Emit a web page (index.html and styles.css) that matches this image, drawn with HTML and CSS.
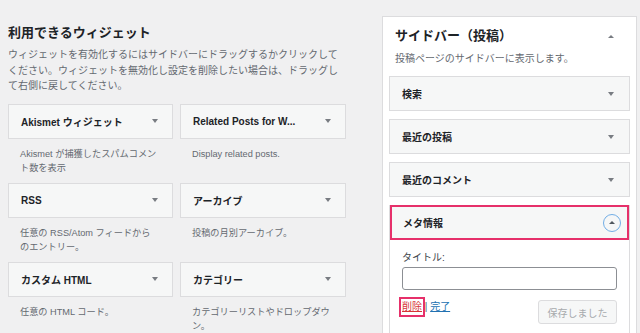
FILE: index.html
```html
<!DOCTYPE html>
<html lang="ja">
<head>
  <meta charset="utf-8">
  <title>ウィジェット</title>
  <link rel="stylesheet" href="styles.css">
</head>
<body>
  <div class="widgets-page">
    <div class="available">
      <h2>利用できるウィジェット</h2>
      <p class="intro">ウィジェットを有効化するにはサイドバーにドラッグするかクリックしてください。ウィジェットを無効化し設定を削除したい場合は、ドラッグして右側に戻してください。</p>
      <div class="widget-list">
        <div class="widget">
          <div class="widget-top"><span>Akismet ウィジェット</span><i class="arrow-down"></i></div>
          <p class="widget-desc">Akismet が捕獲したスパムコメント数を表示</p>
        </div>
        <div class="widget">
          <div class="widget-top"><span>Related Posts for W...</span><i class="arrow-down"></i></div>
          <p class="widget-desc">Display related posts.</p>
        </div>
        <div class="widget">
          <div class="widget-top"><span>RSS</span><i class="arrow-down"></i></div>
          <p class="widget-desc">任意の RSS/Atom フィードからのエントリー。</p>
        </div>
        <div class="widget">
          <div class="widget-top"><span>アーカイブ</span><i class="arrow-down"></i></div>
          <p class="widget-desc">投稿の月別アーカイブ。</p>
        </div>
        <div class="widget">
          <div class="widget-top"><span>カスタム HTML</span><i class="arrow-down"></i></div>
          <p class="widget-desc">任意の HTML コード。</p>
        </div>
        <div class="widget">
          <div class="widget-top"><span>カテゴリー</span><i class="arrow-down"></i></div>
          <p class="widget-desc">カテゴリーリストやドロップダウン。</p>
        </div>
      </div>
    </div>

    <div class="sidebar">
      <div class="sidebar-head">
        <h3>サイドバー（投稿）</h3>
        <i class="arrow-up"></i>
      </div>
      <p class="sidebar-desc">投稿ページのサイドバーに表示します。</p>

      <div class="widget-top in-sidebar"><span>検索</span><i class="arrow-down"></i></div>
      <div class="widget-top in-sidebar"><span>最近の投稿</span><i class="arrow-down"></i></div>
      <div class="widget-top in-sidebar"><span>最近のコメント</span><i class="arrow-down"></i></div>

      <div class="widget-open">
        <div class="widget-top in-sidebar highlight">
          <span>メタ情報</span>
          <span class="toggle"><i class="arrow-up"></i></span>
        </div>
        <div class="widget-inside">
          <label for="meta-title">タイトル:</label>
          <input type="text" id="meta-title">
          <div class="widget-actions">
            <div class="links"><a href="#" class="delete">削除</a> | <a href="#" class="done">完了</a></div>
            <button class="btn-save" disabled>保存しました</button>
          </div>
        </div>
      </div>
    </div>
  </div>
</body>
</html>
```

FILE: styles.css
```css
body {
  margin: 0;
  background: #f0f0f1;
  font-family: 'Liberation Sans', 'Noto Sans CJK JP', sans-serif;
  color: #1d2327;
  overflow: hidden;
  height: 333px;
}

.widgets-page {
  display: flex;
  padding-left: 8px;
}

.available {
  width: 338px;
}

.available h2 {
  margin: 0;
  padding-top: 23px;
  font-size: 13px;
  line-height: 20px;
  font-weight: bold;
}

.intro {
  margin: 4px 0 0;
  font-size: 10px;
  line-height: 15.5px;
  color: #646970;
}

.widget-list {
  display: grid;
  grid-template-columns: 165px 166px;
  column-gap: 7px;
  margin-top: 10px;
}

.widget-top {
  display: flex;
  justify-content: space-between;
  align-items: center;
  height: 33px;
  padding: 0 14px 0 12px;
  background: #f6f7f7;
  border: 1px solid #dcdcde;
  font-size: 10px;
  font-weight: bold;
}

.widget-desc {
  margin: 8px 0 8px;
  padding: 0 14px 0 12px;
  min-height: 28px;
  font-size: 9.2px;
  line-height: 14px;
  color: #646970;
}

.arrow-down {
  width: 0;
  height: 0;
  border-left: 3px solid transparent;
  border-right: 3px solid transparent;
  border-top: 4px solid #787c82;
}

.arrow-up {
  width: 0;
  height: 0;
  border-left: 3px solid transparent;
  border-right: 3px solid transparent;
  border-bottom: 3px solid #787c82;
}

/* panel on the right */
.sidebar {
  margin-left: 36px;
  margin-top: 16px;
  width: 241px;
  height: 330px;
  padding: 0 6px;
  background: #fff;
  border: 1px solid #dcdcde;
}

.sidebar-head {
  display: flex;
  justify-content: space-between;
  align-items: center;
  padding: 10px 16px 0 6px;
}

.sidebar-head h3 {
  margin: 0;
  font-size: 13px;
  line-height: 18px;
  font-weight: bold;
}

.sidebar-desc {
  margin: 6px 0 9px 6px;
  font-size: 10px;
  line-height: 16px;
  color: #646970;
}

.widget-top.in-sidebar {
  margin-bottom: 8px;
  padding-right: 15px;
}

.widget-open {
  background: #fff;
  border-left: 1px solid #dcdcde;
  border-right: 1px solid #dcdcde;
}

.widget-top.highlight {
  margin: 0;
  height: 31px;
  padding: 0 6px 0 11px;
  border: 2px solid #e6306a;
}

.toggle {
  display: flex;
  justify-content: center;
  align-items: center;
  width: 16px;
  height: 16px;
  border: 1.5px solid #72aee6;
  border-radius: 50%;
}

.toggle .arrow-up {
  border-bottom-color: #50575e;
}

.widget-inside {
  padding: 11px 12px 10px;
}

.widget-inside label {
  display: block;
  font-size: 10px;
  line-height: 14px;
  color: #3c434a;
}

.widget-inside input {
  display: block;
  box-sizing: border-box;
  width: 100%;
  height: 23px;
  margin-top: 2px;
  border: 1px solid #8c8f94;
  border-radius: 3px;
}

.widget-actions {
  display: flex;
  justify-content: space-between;
  align-items: flex-start;
  margin-top: 10px;
}

.links {
  font-size: 10px;
  line-height: 14px;
  color: #50575e;
}

.links .delete {
  display: inline-block;
  color: #d63638;
  outline: 2px solid #e6306a;
  outline-offset: 1px;
}

.links .done {
  color: #2271b1;
}

.btn-save {
  width: 79px;
  height: 24px;
  padding: 0;
  background: #f6f7f7;
  border: 1px solid #dcdcde;
  border-radius: 3px;
  font-family: inherit;
  font-size: 10px;
  color: #a7aaad;
}
```
